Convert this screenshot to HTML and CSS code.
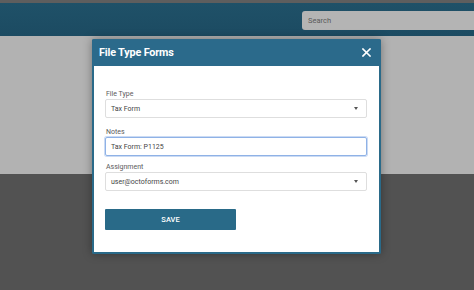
FILE: index.html
```html
<!DOCTYPE html>
<html>
<head>
<meta charset="utf-8">
<link rel="stylesheet" href="styles.css">
</head>
<body>
<div class="page">
  <div class="topstrip"></div>
  <header class="appbar">
    <div class="search">Search</div>
  </header>
  <main class="content"></main>
  <footer class="footer"></footer>
</div>

<div class="modal">
  <div class="modal-head">
    <span class="modal-title">File Type Forms</span>
    <svg class="close" width="9" height="9" viewBox="0 0 9 9"><path d="M1 1 L8 8 M8 1 L1 8" stroke="#fff" stroke-width="1.6" stroke-linecap="square"/></svg>
  </div>
  <div class="modal-body">
    <div class="field first">
      <div class="label">File Type</div>
      <div class="box select"><span>Tax Form</span><span class="caret"></span></div>
    </div>
    <div class="field second">
      <div class="label">Notes</div>
      <div class="box focus"><span>Tax Form: P1125</span></div>
    </div>
    <div class="field">
      <div class="label">Assignment</div>
      <div class="box select"><span>user@octoforms.com</span><span class="caret"></span></div>
    </div>
    <div class="btn">SAVE</div>
  </div>
</div>
</body>
</html>
```
FILE: styles.css
```css
* { box-sizing: border-box; }
html, body { margin: 0; padding: 0; }
body {
  width: 474px;
  height: 290px;
  overflow: hidden;
  font-family: Roboto, "Liberation Sans", sans-serif;
  position: relative;
}
.page { display: flex; flex-direction: column; height: 290px; }
.topstrip { height: 3px; background: #5e5e5e; }
.appbar {
  height: 33px;
  background: linear-gradient(180deg, #1f5168 0%, #1c4b62 100%);
  display: flex;
  justify-content: flex-end;
  padding-top: 8px;
}
.search {
  width: 174px;
  margin-right: -2px;
  height: 19px;
  background: #b4b4b4;
  border-radius: 3px 0 0 3px;
  color: #5a5a5a;
  font-size: 7.5px;
  line-height: 19px;
  padding-left: 6px;
}
.content { height: 138px; background: #b2b2b2; }
.footer { flex: 1; background: #525252; }

.modal {
  position: absolute;
  left: 92px;
  top: 39px;
  width: 289px;
  height: 215px;
  border: 2px solid #2a6a89;
  border-top: 0;
  border-radius: 2px;
  background: #fff;
  box-shadow: 0 0 10px rgba(0,0,0,0.35);
  display: flex;
  flex-direction: column;
}
.modal-head {
  height: 27px;
  margin: 0 -2px;
  background: #2b6a8b;
  border-radius: 2px 2px 0 0;
  display: flex;
  align-items: center;
  justify-content: space-between;
  padding: 0 10px 0 7px;
}
.modal-title {
  color: #fff;
  font-weight: 700;
  font-size: 10.8px;
  letter-spacing: -0.15px;
}
.close { display: block; }
.modal-body {
  padding: 23px 12px 0 11px;
  display: flex;
  flex-direction: column;
}
.field { margin-bottom: 8px; }
.field.first { margin-bottom: 9px; }
.field.second { margin-bottom: 6px; }
.label {
  font-size: 7px;
  line-height: 10px;
  color: #5b5b5b;
  padding-left: 1px;
}
.box {
  height: 19px;
  border: 1px solid #dedede;
  border-radius: 2px;
  display: flex;
  align-items: center;
  justify-content: space-between;
  padding: 0 8px 0 5px;
  font-size: 7px;
  color: #444;
}
.box.focus {
  border: 1px solid #8fb2e6;
  box-shadow: 0 0 0 1px rgba(140,175,230,0.45);
}
.caret {
  width: 0;
  height: 0;
  border-left: 2.5px solid transparent;
  border-right: 2.5px solid transparent;
  border-top: 3px solid #555;
}
.btn {
  margin-top: 10px;
  width: 131px;
  height: 21px;
  background: #296a88;
  border-radius: 1px;
  color: #fff;
  font-size: 7.5px;
  font-weight: 500;
  display: flex;
  align-items: center;
  justify-content: center;
}
```
